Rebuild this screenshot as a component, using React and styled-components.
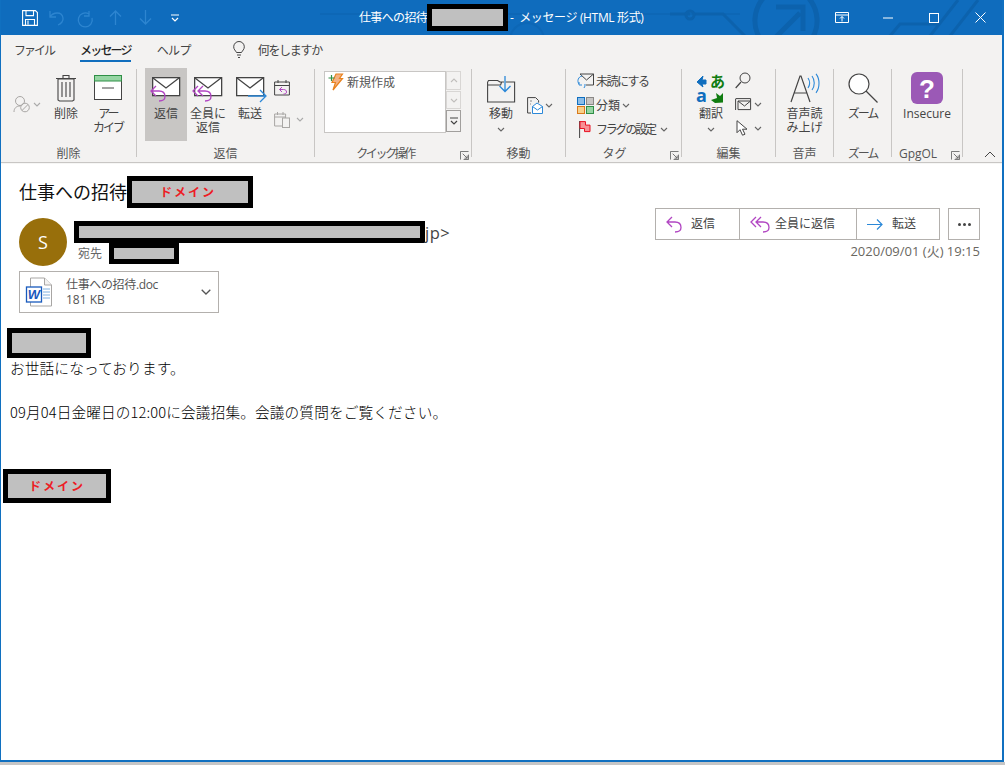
import React from "react";
import styled, { createGlobalStyle } from "styled-components";

const Global = createGlobalStyle`
  html, body { margin: 0; padding: 0; background: #fff; }
  body { font-family: "Noto Sans CJK JP", "Noto Sans", sans-serif; font-feature-settings: "palt"; }
`;
const UI = `"Open Sans", "Noto Sans CJK JP", sans-serif`;

const Win = styled.div`
  width: 1004px; height: 762px; box-sizing: border-box; overflow: hidden;
  border-left: 1px solid #1070c0; border-right: 2px solid #1070c0; border-bottom: 2px solid #1070c0;
  display: flex; flex-direction: column; background: #fff;
`;
const Shade = styled.div`height: 3px; background: #c6c6c6;`;
const TitleBar = styled.div`
  height: 35px; margin: 0 -2px 0 -1px; background: #0f6cbd; position: relative; flex: none;
  display: flex; align-items: center; color: #fff; overflow: hidden;
`;
const TitleArt = styled.svg`position: absolute; left: 0; top: 0;`;
const Qat = styled.div`
  display: flex; align-items: center; padding-left: 21px; position: relative; width: 359px; box-sizing: border-box; height: 35px;
`;
const QatSlot = styled.span`display: flex; justify-content: center; width: ${p => p.$w}px; flex: none;`;
const Title = styled.div`
  display: flex; align-items: center; font: 12px/16px ${UI}; position: relative; color: #fff; white-space: nowrap;
`;
const TitleMain = styled.span`letter-spacing: -.65px;`;
const TitleSuffix = styled.span`margin-left: 2px; letter-spacing: -.35px;`;
const Controls = styled.div`
  display: flex; align-items: center; position: absolute; right: 1px; top: 0; height: 35px;
`;
const Control = styled.span`display: flex; justify-content: center; width: 46px;`;

const Redact = styled.span`
  display: inline-flex; align-items: center; justify-content: center; box-sizing: border-box; flex: none;
  width: ${p => p.$w}px; height: ${p => p.$h}px; border: 5px solid #000; background: #c0c0c0;
  color: #ed1c24; font: 700 12px/14px "Noto Sans CJK JP", sans-serif; letter-spacing: 2px;
  font-feature-settings: normal; padding-right: ${p => p.$pr || 0}px;
`;

const Tabs = styled.div`
  height: 29px; background: #f3f2f1; display: flex; align-items: flex-start; flex: none;
  font: 12px/16px "Noto Sans CJK JP", sans-serif; color: #444; padding-top: 7px; box-sizing: border-box;
`;
const Tab = styled.div`
  margin-left: ${p => p.$ml}px; height: 20px; box-sizing: border-box; white-space: nowrap;
  color: ${p => p.$on ? "#222" : "#444"}; font-weight: ${p => p.$on ? 500 : 400};
  border-bottom: ${p => p.$on ? "2px solid #106ebe" : "none"};
  letter-spacing: ${p => p.$ls || 0}px;
`;
const Tell = styled.div`display: flex; align-items: center; gap: 13px; margin-left: 34px; height: 16px; white-space: nowrap; letter-spacing: -1.3px;`;

const Ribbon = styled.div`
  height: 98px; background: #f3f2f1; display: flex; padding: 5px 0; box-sizing: border-box; flex: none; position: relative;
  box-shadow: 0 1px 1px #c8c6c4; z-index: 1;
  color: #444; font: 12px/14px "Noto Sans CJK JP", sans-serif;
`;
const Group = styled.div`
  width: ${p => p.$w}px; height: 88px; box-sizing: border-box; border-right: 1px solid #c8c6c4; position: relative; flex: none;
  display: flex; flex-direction: column;
`;
const GroupBody = styled.div`
  height: 73px; margin-top: -1px; display: flex; align-items: flex-start; padding-left: ${p => p.$pl || 0}px; flex: none;
`;
const GroupLabel = styled.div`
  margin-top: 5px; padding-right: ${p => p.$pr || 0}px; height: 16px; line-height: 16px; text-align: center; color: #555; white-space: nowrap; font-family: ${UI};
  letter-spacing: ${p => p.$ls || 0}px;
`;
const Launcher = styled.svg`position: absolute; right: 2px; bottom: -3px;`;
const Collapse = styled.svg`position: absolute; left: 983px; top: 87px;`;

const Large = styled.div`
  width: ${p => p.$w || 42}px; height: 73px; flex: none; display: flex; flex-direction: column; align-items: center;
  background: ${p => p.$on ? "#c8c6c4" : "transparent"}; text-align: center;
`;
const IconBox = styled.div`
  height: ${p => p.$h || 39}px; width: 100%; display: flex; align-items: center; justify-content: center; flex: none;
`;
const Label = styled.div`white-space: pre-line; line-height: 14px; color: #444; font-family: ${UI}; letter-spacing: ${p => p.$ls || 0}px;`;
const Small = styled.div`
  display: flex; flex-direction: column; align-items: flex-start; width: ${p => p.$w}px; flex: none; padding-top: ${p => p.$pt || 0}px; padding-left: ${p => p.$pl || 0}px; box-sizing: border-box;
`;
const SmallRow = styled.div`display: flex; align-items: center; gap: ${p => p.$gap || 2}px; height: ${p => p.$h || 24}px; white-space: nowrap; letter-spacing: ${p => p.$ls || 0}px;`;

const Gallery = styled.div`
  width: 137px; height: 62px; margin: 3px 0 0 9px; display: flex; flex: none;
`;
const GalleryList = styled.div`
  flex: 1; background: #fff; border: 1px solid #c8c6c4; display: flex; align-items: flex-start; gap: 4px; padding: 1px 0 0 3px; height: 62px; box-sizing: border-box; color: #555;
`;
const GalleryText = styled.span`line-height: 18px;`;
const GalleryScroll = styled.div`display: flex; flex-direction: column; width: 15px; height: 62px;`;
const ScrollBtn = styled.div`
  flex: ${p => p.$g || 1}; border: 1px solid ${p => p.$dark ? "#a19f9d" : "#d8d6d4"}; display: flex; align-items: center; justify-content: center; box-sizing: border-box; margin-bottom: 1px;
`;
const UnderLabel = styled.div`margin-top: 6px;`;

const Content = styled.div`flex: 1; background: #fff; position: relative;`;
const Header = styled.div`
  display: flex; padding: 14px 22px 0 18px; justify-content: space-between; height: 166px; box-sizing: border-box;
`;
const HeadLeft = styled.div`display: flex; flex-direction: column;`;
const Subject = styled.div`
  display: flex; align-items: center; font: 18px/32px ${UI}; color: #111; height: 32px; font-feature-settings: normal;
`;
const Sender = styled.div`display: flex; margin-top: 10px;`;
const Avatar = styled.div`
  width: 48px; height: 48px; border-radius: 50%; background: #986f0b; color: #fff; display: flex; align-items: center; justify-content: center; font: 18px/1 "Open Sans", sans-serif;
`;
const SenderInfo = styled.div`margin-left: 7px; margin-top: 3px; display: flex; flex-direction: column;`;
const FromLine = styled.div`display: flex; align-items: flex-start; height: 22px; font: 16.5px/24px "Open Sans", sans-serif; color: #444; letter-spacing: .5px;`;
const ToLine = styled.div`display: flex; align-items: center; font: 12px/16px ${UI}; color: #666; padding-left: 4px; height: 21px; gap: 7px;`;
const Attachment = styled.div`
  width: 200px; height: 42px; box-sizing: border-box; border: 1px solid #b3b0ad; margin-top: 5px; display: flex; align-items: center; padding-left: 6px; background: #fff;
`;
const AttachText = styled.div`margin-left: 10px; flex: 1; font: 12px/15px ${UI}; color: #555;`;
const AttachName = styled.div`white-space: nowrap; letter-spacing: -.35px;`;
const HeadRight = styled.div`display: flex; flex-direction: column; align-items: flex-end; padding-top: 32px;`;
const Actions = styled.div`display: flex; gap: 8px;`;
const ActionGroup = styled.div`display: flex; border: 1px solid #b3b0ad; height: 32px; box-sizing: border-box;`;
const Action = styled.div`
  width: ${p => p.$w}px; display: flex; align-items: center; padding-left: 10px; gap: ${p => p.$gap || 9}px; box-sizing: border-box; font: 12px/16px ${UI}; color: #444;
  border-left: ${p => p.$first ? "none" : "1px solid #b3b0ad"}; white-space: nowrap;
`;
const More = styled.div`
  width: 32px; height: 32px; box-sizing: border-box; border: 1px solid #b3b0ad; display: flex; align-items: center; justify-content: center; gap: 2px;
`;
const Dot = styled.i`width: 3px; height: 3px; border-radius: 50%; background: #444; display: block;`;
const DateText = styled.div`font: 13px/16px ${UI}; color: #69675f; margin-top: 3px; white-space: nowrap;`;

const MailBody = styled.div`
  padding-left: 6px; display: flex; flex-direction: column; align-items: flex-start;
  font: 300 14.67px/19px "Noto Sans CJK JP", sans-serif; color: #000; font-feature-settings: normal; letter-spacing: .13px;
`;
const Para = styled.div`padding-left: 3px; height: 22px; white-space: nowrap;`;
const Footer = styled.div`margin: 45px 0 0 -4px;`;

/* ---------- icons ---------- */
const S = ({ w, h, children, style }) => (
  <svg width={w} height={h} viewBox={`0 0 ${w} ${h}`} fill="none" style={{ display: "block", overflow: "visible", ...style }}>{children}</svg>
);
const Chev = ({ c = "#666" }) => <S w={8} h={5}><path d="M1 1l3 3 3-3" stroke={c} strokeWidth="1.1" /></S>;
const ReplyArrow = ({ x = 0, y = 0, c = "#b146c2" }) => (
  <path transform={`translate(${x} ${y})`} d="M6 1L1 6l5 5M1 6h8c4 0 6 2.500 6 5.500S13 16 9 16" stroke={c} strokeWidth="1.3" fill="none" />
);
const ReplyAllArrow = ({ x = 0, y = 0, c = "#b146c2" }) => (
  <g transform={`translate(${x} ${y})`} stroke={c} strokeWidth="1.3" fill="none">
    <path d="M6 1L1 6l5 5M11 1L6 6l5 5M6 6h7c4 0 6 2.500 6 5.500S17 16 13 16" />
  </g>
);
const Env = () => (
  <g stroke="#444" strokeWidth="1.3" fill="#fff">
    <rect x=".65" y=".65" width="27" height="18" />
    <path d="M1 1l13 10L27 1" fill="none" />
  </g>
);
const Launch = () => (
  <Launcher width="9" height="9" viewBox="0 0 10 10" fill="none" stroke="#666">
    <path d="M.5 9.500v-9h9M9.500 4v5.500H4M3 3l5 5M5 8h3V5" />
  </Launcher>
);

export default function App() {
  return (
    <>
      <Global />
      <Win>
        <TitleBar>
          <TitleArt width="1005" height="35" viewBox="0 0 1005 35" fill="none" stroke="#0c62ad" strokeWidth="3">
            <path d="M320 14h420M510 40a17 17 0 0 1 34 0" strokeWidth="2" opacity=".45" />
            <path d="M670 14h20M695 14h28l22 22" />
            <circle cx="690" cy="15" r="4" />
            <path d="M766 -5c-14 14-14 34-4 46M806 -5c14 14 14 34 4 46" strokeWidth="5" />
            <path d="M776 37l24-24M776 7h27v24" strokeWidth="5" />
            <path d="M890 36l10-12h40M930 36l28-36M950 36l28-36" />
          </TitleArt>
          <Qat>
            <QatSlot $w={18}>
              <S w={16} h={16}><path d="M.6.6h12.800l2 2v12.800H.6zM4 .6v5h7.500v-5M3.500 15.400V9.500h9v5.900M6 10.500v4" stroke="#fff" strokeWidth="1.1" /></S>
            </QatSlot>
            <QatSlot $w={34}>
              <S w={15} h={16}><path d="M1 1v6h6M1 7c3-5 12-6 13 1 .5 3-2 6-5 7" stroke="#2d85d0" strokeWidth="1.3" /></S>
            </QatSlot>
            <QatSlot $w={24}>
              <S w={16} h={16}><path d="M12 1v5h-5M12 4a7 7 0 1 0 3 4" stroke="#2d85d0" strokeWidth="1.3" /></S>
            </QatSlot>
            <QatSlot $w={36}>
              <S w={13} h={15}><path d="M6.500 15V1M1 6.500L6.500 1 12 6.500" stroke="#2d85d0" strokeWidth="1.3" /></S>
            </QatSlot>
            <QatSlot $w={24}>
              <S w={13} h={15}><path d="M6.500 0v14M1 8.500L6.500 14 12 8.500" stroke="#2d85d0" strokeWidth="1.3" /></S>
            </QatSlot>
            <QatSlot $w={36}>
              <S w={8} h={8}><path d="M0 1h8M1 4l3 3 3-3" stroke="#fff" strokeWidth="1.2" /></S>
            </QatSlot>
          </Qat>
          <Title>
            <TitleMain>仕事への招待</TitleMain>
            <Redact $w={81} $h={27} />
            <TitleSuffix>-&nbsp; メッセージ (HTML 形式)</TitleSuffix>
          </Title>
          <Controls>
            <Control>
              <S w={14} h={11}><path d="M.5.5h13v10H.500zM.5 3h13" stroke="#fff" /><path d="M7 9.500V4.500M5 6.500l2-2 2 2" stroke="#fff" /></S>
            </Control>
            <Control><S w={10} h={2}><path d="M0 1h10" stroke="#fff" /></S></Control>
            <Control><S w={10} h={10}><rect x=".5" y=".5" width="9" height="9" stroke="#fff" /></S></Control>
            <Control><S w={11} h={11}><path d="M.5.5l10 10M10.500.5l-10 10" stroke="#fff" /></S></Control>
          </Controls>
        </TitleBar>

        <Tabs>
          <Tab $ml={13} $ls={-2}>ファイル</Tab>
          <Tab $ml={26} $on $ls={-1.8}>メッセージ</Tab>
          <Tab $ml={26} $ls={-.7}>ヘルプ</Tab>
          <Tell>
            <S w={12} h={18} style={{ marginLeft: 8 }}>
              <path d="M3.500 11.500C2.500 9.500.7 8.500.7 5.800a5.300 5.300 0 0 1 10.600 0c0 2.700-1.800 3.700-2.800 5.700zM4 14h4M5 16.500h2" stroke="#444" />
            </S>
            何をしますか
          </Tell>
        </Tabs>

        <Ribbon>
          <Group $w={136}>
            <GroupBody>
              <Small $w={44} $pl={12} $pt={25}>
                <SmallRow $gap={2} $h={22}>
                  <S w={18} h={18}>
                    <circle cx="7" cy="6" r="4.500" stroke="#a8a6a4" /><path d="M1 17c0-4 2.500-6 6-6" stroke="#a8a6a4" />
                    <circle cx="12" cy="12.500" r="4.300" stroke="#a8a6a4" /><path d="M9 15.500l6-6" stroke="#a8a6a4" />
                  </S>
                  <Chev c="#aaa" />
                </SmallRow>
              </Small>
              <Large $w={42}>
                <IconBox>
                  <S w={22} h={29}>
                    <path d="M3 6h16v21l-1.500 1h-13L3 27zM1 5.500h20M8 5V2.500h6V5M7 9v15M11 9v15M15 9v15" stroke="#444" strokeWidth="1.1" />
                  </S>
                </IconBox>
                <Label>削除</Label>
              </Large>
              <Large $w={42}>
                <IconBox>
                  <S w={28} h={25}>
                    <rect x=".5" y="5" width="27" height="19.500" fill="#fff" stroke="#444" />
                    <rect x=".5" y=".5" width="27" height="5.500" fill="#96d5a3" stroke="#2f8f46" />
                    <path d="M8 13h12" stroke="#444" />
                  </S>
                </IconBox>
                <Label $ls={-2}>{"アー\nカイブ"}</Label>
              </Large>
            </GroupBody>
            <GroupLabel>削除</GroupLabel>
          </Group>

          <Group $w={178}>
            <GroupBody $pl={8}>
              <Large $on>
                <IconBox>
                  <S w={30} h={30} style={{ marginLeft: -2 }}><g transform="translate(2 4)"><Env /></g><ReplyArrow x={0} y={12} /></S>
                </IconBox>
                <Label>返信</Label>
              </Large>
              <Large>
                <IconBox>
                  <S w={30} h={30} style={{ marginLeft: -2 }}><g transform="translate(2 4)"><Env /></g><ReplyAllArrow x={0} y={12} /></S>
                </IconBox>
                <Label>{"全員に\n返信"}</Label>
              </Large>
              <Large>
                <IconBox>
                  <S w={32} h={30} style={{ marginLeft: 1 }}><g transform="translate(1 4)"><Env /></g>
                    <path d="M13 23h17M25 17l6 6-6 6" stroke="#2b88d8" strokeWidth="1.3" fill="none" />
                  </S>
                </IconBox>
                <Label>転送</Label>
              </Large>
              <Small $w={40} $pl={3} $pt={4}>
                <SmallRow $h={31}>
                  <S w={16} h={17}>
                    <path d="M.6 3h14.800v13H.6zM.6 6.500h14.800M4 1v3M12 1v3" stroke="#444" />
                    <path d="M8 8L5.500 10.500 8 13M5.500 10.500h4c2 0 3 1 3 2.500s-1 2-3 2" stroke="#b146c2" />
                  </S>
                </SmallRow>
                <SmallRow $h={32} $gap={6}>
                  <S w={16} h={17}>
                    <path d="M.6 3h11v12H.6zM.6 6h11M3.500 1v3M9 1v3" stroke="#a8a6a4" /><rect x="8.500" y="7" width="7" height="9.500" fill="#f3f2f1" stroke="#a8a6a4" />
                  </S>
                  <Chev c="#aaa" />
                </SmallRow>
              </Small>
            </GroupBody>
            <GroupLabel>返信</GroupLabel>
          </Group>

          <Group $w={157}>
            <GroupBody>
              <Gallery>
                <GalleryList>
                  <S w={15} h={18}>
                    <path d="M8 1h6.500l-3 4.500h3L5 17l2.500-7.500H4z" fill="#f4b183" stroke="#e8821e" strokeWidth="1.2" />
                    <path d="M.5 5h6M3.500 2v6" stroke="#2f8f46" strokeWidth="1.2" />
                  </S>
                  <GalleryText>新規作成</GalleryText>
                </GalleryList>
                <GalleryScroll>
                  <ScrollBtn $g={19}><S w={8} h={5}><path d="M1 4l3-3 3 3" stroke="#c0bebc" strokeWidth="1.1" /></S></ScrollBtn>
                  <ScrollBtn $g={18}><Chev c="#c0bebc" /></ScrollBtn>
                  <ScrollBtn $g={22} $dark>
                    <S w={8} h={8}><path d="M0 1h8M1 4l3 3 3-3" stroke="#444" strokeWidth="1.2" /></S>
                  </ScrollBtn>
                </GalleryScroll>
              </Gallery>
            </GroupBody>
            <GroupLabel $pr={16} $ls={-2.4}>クイック操作</GroupLabel>
            <Launch />
          </Group>

          <Group $w={94}>
            <GroupBody $pl={8}>
              <Large $w={42}>
                <IconBox>
                  <S w={28} h={27} style={{ marginTop: 4 }}>
                    <path d="M.6 6v20h27V6h-9M.6 6l1-1.500h9L13 6h4M.6 9h13l1-3" stroke="#444" strokeWidth="1.1" />
                    <path d="M18 0v15M12.500 10l5.500 5.500 5.500-5.500" stroke="#2b88d8" strokeWidth="1.3" />
                  </S>
                </IconBox>
                <Label>移動</Label>
                <UnderLabel><Chev /></UnderLabel>
              </Large>
              <Small $w={40} $pt={29} $pl={5}>
                <SmallRow $h={16} $gap={2}>
                  <S w={16} h={17}>
                    <path d="M4 16H.6V.6h8l3 3v2" stroke="#444" /><path d="M3 4h2M3 7h1" stroke="#888" />
                    <path d="M5.500 9.500L10 6l5.500 3.500v7h-10z" fill="#fff" stroke="#2b88d8" /><path d="M5.500 9.500l5 3.500 5-3.500" stroke="#2b88d8" />
                  </S>
                  <Chev />
                </SmallRow>
              </Small>
            </GroupBody>
            <GroupLabel>移動</GroupLabel>
          </Group>

          <Group $w={116}>
            <GroupBody $pl={11}>
              <Small $w={104} $pt={1}>
                <SmallRow $h={24} $gap={2} $ls={-1.5}>
                  <S w={17} h={16}>
                    <path d="M3 1h13.500v11H9M3 1l6.500 6L16.500 1" stroke="#444" fill="none" />
                    <path d="M5 3a5 5 0 0 0-3 8M2 9v3h3M7 15a5 5 0 0 0 1-4" stroke="#2b88d8" fill="none" />
                  </S>
                  未読にする
                </SmallRow>
                <SmallRow $h={24} $gap={2}>
                  <S w={17} h={17}>
                    <rect x=".5" y=".5" width="7" height="7" fill="#8bbde8" stroke="#106ebe" />
                    <rect x="9.500" y=".5" width="7" height="7" fill="#c8c6c4" stroke="#8a8886" />
                    <rect x=".5" y="9.500" width="7" height="7" fill="#f7d08a" stroke="#d8791c" />
                    <rect x="9.500" y="9.500" width="7" height="7" fill="#96d5a3" stroke="#2f8f46" />
                  </S>
                  分類 <Chev />
                </SmallRow>
                <SmallRow $h={24} $gap={5} $ls={-2.2}>
                  <S w={12} h={17} style={{ marginLeft: 2 }}>
                    <path d="M.6 0v17" stroke="#444" /><path d="M1 .6h5.500v3.500h4.500v6.500H5.500V7.500H1z" fill="#f78f94" stroke="#e81123" />
                  </S>
                  フラグの設定 <Chev />
                </SmallRow>
              </Small>
            </GroupBody>
            <GroupLabel $pr={18}>タグ</GroupLabel>
            <Launch />
          </Group>

          <Group $w={94}>
            <GroupBody $pl={8}>
              <Large $w={42}>
                <IconBox>
                  <S w={30} h={30} style={{ marginTop: 2 }}>
                    <path d="M10 6H6l1-4-6 6 6 5-1-3h4z" fill="#106ebe" stroke="#106ebe" />
                    <text x="14" y="13" fontSize="15" fontWeight="700" fill="#107c10" fontFamily="Noto Sans CJK JP">あ</text>
                    <text x="0" y="28" fontSize="18" fontWeight="700" fill="#106ebe" fontFamily="Open Sans">a</text>
                    <path d="M15 26l4 3 8-.5V19l-3 3-4-3 1 5z" fill="#107c10" />
                  </S>
                </IconBox>
                <Label>翻訳</Label>
                <UnderLabel><Chev /></UnderLabel>
              </Large>
              <Small $w={44} $pl={3}>
                <SmallRow $h={24}>
                  <S w={16} h={17}><circle cx="10" cy="6" r="5" stroke="#444" /><path d="M6 10L.7 16" stroke="#444" strokeWidth="1.2" /></S>
                </SmallRow>
                <SmallRow $h={24} $gap={3}>
                  <S w={16} h={13}><path d="M.6 1v11M.6.6h15v11H3V3h12.500M3 3l6.500 5L15.500 3" stroke="#444" /></S>
                  <Chev />
                </SmallRow>
                <SmallRow $h={24} $gap={3}>
                  <S w={16} h={16}><path d="M2 .7v12l3-3 2.500 5.500 2.500-1-2.500-5h4.500z" stroke="#444" fill="#fff" /></S>
                  <Chev />
                </SmallRow>
              </Small>
            </GroupBody>
            <GroupLabel>編集</GroupLabel>
          </Group>

          <Group $w={58}>
            <GroupBody>
              <Large $w={57}>
                <IconBox>
                  <S w={29} h={30}>
                    <path d="M1 29L10 3h1l9 26M4.500 20h12.500" stroke="#444" strokeWidth="1.2" />
                    <path d="M18 5c2 3 2 7 0 10M22 3c3 4 3 10 0 14M26 .8c4 5 4 14 0 19" stroke="#2b88d8" strokeWidth="1.1" />
                  </S>
                </IconBox>
                <Label>{"音声読\nみ上げ"}</Label>
              </Large>
            </GroupBody>
            <GroupLabel>音声</GroupLabel>
          </Group>

          <Group $w={58}>
            <GroupBody>
              <Large $w={57}>
                <IconBox>
                  <S w={30} h={30}>
                    <circle cx="11" cy="11" r="10" stroke="#444" strokeWidth="1.2" fill="#fff" />
                    <path d="M18 18l11.500 11.500" stroke="#444" strokeWidth="1.2" />
                  </S>
                </IconBox>
                <Label $ls={-2}>ズーム</Label>
              </Large>
            </GroupBody>
            <GroupLabel $ls={-2}>ズーム</GroupLabel>
          </Group>

          <Group $w={71}>
            <GroupBody>
              <Large $w={70}>
                <IconBox>
                  <S w={32} h={32}>
                    <rect width="32" height="32" rx="6" fill="#9b59b6" />
                    <text x="16" y="26" textAnchor="middle" fontSize="26" fontWeight="700" fill="#fff" fontFamily="Liberation Sans">?</text>
                  </S>
                </IconBox>
                <Label>Insecure</Label>
              </Large>
            </GroupBody>
            <GroupLabel $pr={18}>GpgOL</GroupLabel>
            <Launch />
          </Group>
          <Collapse width="12" height="7" viewBox="0 0 12 7" fill="none"><path d="M1 6l5-5 5 5" stroke="#444" /></Collapse>
        </Ribbon>

        <Content>
          <Header>
            <HeadLeft>
              <Subject>仕事への招待<Redact $w={126} $h={32} $pr={4}>ドメイン</Redact></Subject>
              <Sender>
                <Avatar>S</Avatar>
                <SenderInfo>
                  <FromLine><Redact $w={351} $h={22} />jp&gt;</FromLine>
                  <ToLine>宛先<Redact $w={70} $h={21} /></ToLine>
                </SenderInfo>
              </Sender>
              <Attachment>
                <S w={30} h={30}>
                  <path d="M4.500 1h14l7 7v21h-21z" fill="#fff" stroke="#a8a6a4" />
                  <path d="M18.500 1v7h7" fill="#f3f2f1" stroke="#a8a6a4" />
                  <path d="M17 12h7M17 15h7M17 18h7M17 21h7" stroke="#7eb0e0" />
                  <rect x=".5" y="10" width="15" height="15" fill="#fff" stroke="#185abd" strokeWidth="1.300" />
                  <text x="8" y="22" textAnchor="middle" fontSize="13" fontWeight="700" fontStyle="italic" fill="#185abd" fontFamily="Liberation Sans">W</text>
                </S>
                <AttachText>
                  <AttachName>仕事への招待.doc</AttachName>
                  <div>181 KB</div>
                </AttachText>
                <S w={10} h={6} style={{ marginRight: 7 }}><path d="M.7.7L5 5 9.300.7" stroke="#555" strokeWidth="1.3" /></S>
              </Attachment>
            </HeadLeft>
            <HeadRight>
              <Actions>
                <ActionGroup>
                  <Action $w={83} $first>
                    <S w={16} h={17}><ReplyArrow /></S>返信
                  </Action>
                  <Action $w={117} $gap={5}>
                    <S w={20} h={17}><ReplyAllArrow /></S>全員に返信
                  </Action>
                  <Action $w={83} $gap={9}>
                    <S w={16} h={11}><path d="M0 5.500h15M10 .5l5 5-5 5" stroke="#2b88d8" strokeWidth="1.2" /></S>転送
                  </Action>
                </ActionGroup>
                <More><Dot /><Dot /><Dot /></More>
              </Actions>
              <DateText>2020/09/01 (火) 19:15</DateText>
            </HeadRight>
          </Header>
          <MailBody>
            <Redact $w={84} $h={30} />
            <Para>お世話になっております。</Para>
            <Para />
            <Para>09月04日金曜日の12:00に会議招集。会議の質問をご覧ください。</Para>
            <Footer><Redact $w={108} $h={34}>ドメイン</Redact></Footer>
          </MailBody>
        </Content>
      </Win>
      <Shade />
    </>
  );
}
